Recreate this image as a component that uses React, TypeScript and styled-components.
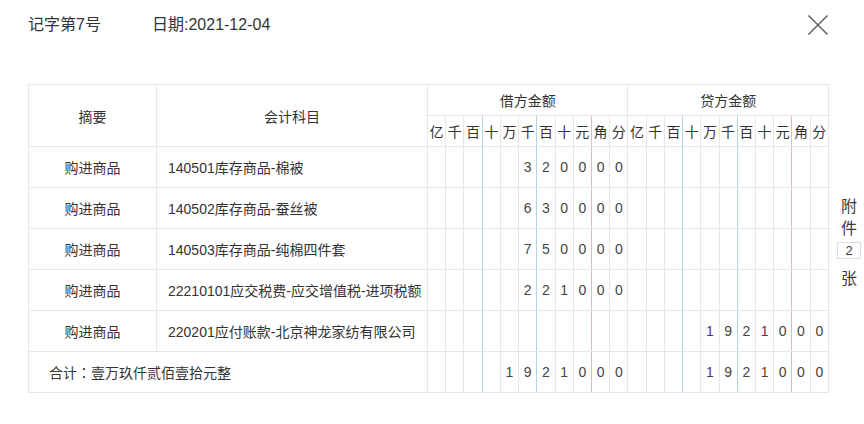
import React from "react";
import styled, { createGlobalStyle } from "styled-components";

const GlobalStyle = createGlobalStyle`
  html, body {
    margin: 0;
    padding: 0;
    background: #ffffff;
  }
  body {
    font-family: "Liberation Sans", "Noto Sans CJK SC", sans-serif;
    color: #333333;
  }
`;

const Page = styled.div`
  width: 864px;
  height: 424px;
  box-sizing: border-box;
  padding: 15px 0 0 28px;
  overflow: hidden;
`;

const TopBar = styled.div`
  display: flex;
  align-items: center;
  height: 20px;
  padding-right: 36px;
  font-size: 16px;
  line-height: 20px;
  color: #333333;
`;

const Title = styled.span`
  width: 124px;
`;

const DateText = styled.span`
  flex: 1;
`;

const CloseButton = styled.button`
  width: 22px;
  height: 22px;
  padding: 0;
  margin-right: -1px;
  border: none;
  background: transparent;
  display: flex;
  align-items: center;
  justify-content: center;
  cursor: pointer;
`;

const Body = styled.div`
  display: flex;
  align-items: flex-start;
  margin-top: 49px;
`;

const Table = styled.table`
  width: 801px;
  border-collapse: collapse;
  table-layout: fixed;
  font-size: 14px;
  color: #333333;
`;

const HeadCell = styled.th<{ $line?: string }>`
  border: 1px solid #e6e6e6;
  ${(p) => (p.$line ? `border-right-color: ${p.$line};` : "")}
  font-weight: normal;
  text-align: center;
  padding: 0;
  height: 30px;
  white-space: nowrap;
  overflow: hidden;
`;

const Row = styled.tr`
  height: 41px;
`;

const TextCell = styled.td<{ $align?: string; $pad?: number }>`
  border: 1px solid #e6e6e6;
  text-align: ${(p) => p.$align || "center"};
  padding: 0 0 0 ${(p) => p.$pad ?? 0}px;
  white-space: nowrap;
  overflow: hidden;
`;

const TotalText = styled.span`
  font-family: "Noto Sans CJK SC", "Liberation Sans", sans-serif;
`;

const Colon = styled.span`
  font-family: "Noto Sans CJK TC", "Noto Sans CJK SC", sans-serif;
`;

const DigitCell = styled.td<{ $line?: string }>`
  border: 1px solid #e6e6e6;
  ${(p) => (p.$line ? `border-right-color: ${p.$line};` : "")}
  text-align: center;
  padding: 0;
  color: #444444;
`;

const Side = styled.div`
  width: 24px;
  margin-left: 8px;
  margin-top: 112px;
  display: flex;
  flex-direction: column;
  align-items: center;
  font-size: 16px;
  line-height: 22px;
  color: #3a3a3a;
`;

const CountBox = styled.div`
  width: 22px;
  height: 15px;
  border: 1px solid #dddddd;
  font-size: 13px;
  line-height: 15px;
  text-align: center;
  margin: 2px 0 9px;
`;

const BLUE = "#b3d4e2";
const RED = "#e6b8b8";
const units = ["亿", "千", "百", "十", "万", "千", "百", "十", "元", "角", "分"];
const lineFor = (i: number) => (i === 2 || i === 5 ? BLUE : i === 8 ? RED : undefined);

const digits = (v: string) => {
  const s = v.padStart(11, " ");
  return s.split("").map((c) => (c === " " ? "" : c));
};

type Entry = { summary: string; account: string; debit: string; credit: string };

const entries: Entry[] = [
  { summary: "购进商品", account: "140501库存商品-棉被", debit: "320000", credit: "" },
  { summary: "购进商品", account: "140502库存商品-蚕丝被", debit: "630000", credit: "" },
  { summary: "购进商品", account: "140503库存商品-纯棉四件套", debit: "750000", credit: "" },
  { summary: "购进商品", account: "22210101应交税费-应交增值税-进项税额", debit: "221000", credit: "" },
  { summary: "购进商品", account: "220201应付账款-北京神龙家纺有限公司", debit: "", credit: "1921000" },
];

const DigitCells: React.FC<{ value: string; side: string }> = ({ value, side }) => (
  <>
    {digits(value).map((d, i) => (
      <DigitCell key={side + i} $line={lineFor(i)}>
        {d}
      </DigitCell>
    ))}
  </>
);

export default function App() {
  return (
    <>
      <GlobalStyle />
      <Page>
        <TopBar>
          <Title>记字第7号</Title>
          <DateText>日期:2021-12-04</DateText>
          <CloseButton aria-label="close">
            <svg width="22" height="22" viewBox="0 0 22 22">
              <path d="M1.5 1.5 L20.5 20.5 M20.5 1.5 L1.5 20.5" stroke="#666666" strokeWidth="1.6" fill="none" />
            </svg>
          </CloseButton>
        </TopBar>
        <Body>
          <Table>
            <colgroup>
              <col style={{ width: 128 }} />
              <col style={{ width: 271 }} />
              {Array.from({ length: 22 }).map((_, i) => (
                <col key={i} />
              ))}
            </colgroup>
            <thead>
              <tr>
                <HeadCell rowSpan={2}>摘要</HeadCell>
                <HeadCell rowSpan={2}>会计科目</HeadCell>
                <HeadCell colSpan={11}>借方金额</HeadCell>
                <HeadCell colSpan={11}>贷方金额</HeadCell>
              </tr>
              <tr>
                {[...units, ...units].map((u, i) => (
                  <HeadCell key={i} $line={lineFor(i % 11)}>
                    {u}
                  </HeadCell>
                ))}
              </tr>
            </thead>
            <tbody>
              {entries.map((e, r) => (
                <Row key={r}>
                  <TextCell>{e.summary}</TextCell>
                  <TextCell $align="left" $pad={11}>
                    {e.account}
                  </TextCell>
                  <DigitCells value={e.debit} side="d" />
                  <DigitCells value={e.credit} side="c" />
                </Row>
              ))}
              <Row>
                <TextCell colSpan={2} $align="left" $pad={20}>
                  <TotalText>
                    合计<Colon>：</Colon>壹万玖仟贰佰壹拾元整
                  </TotalText>
                </TextCell>
                <DigitCells value="1921000" side="d" />
                <DigitCells value="1921000" side="c" />
              </Row>
            </tbody>
          </Table>
          <Side>
            <span>附</span>
            <span>件</span>
            <CountBox>2</CountBox>
            <span>张</span>
          </Side>
        </Body>
      </Page>
    </>
  );
}
